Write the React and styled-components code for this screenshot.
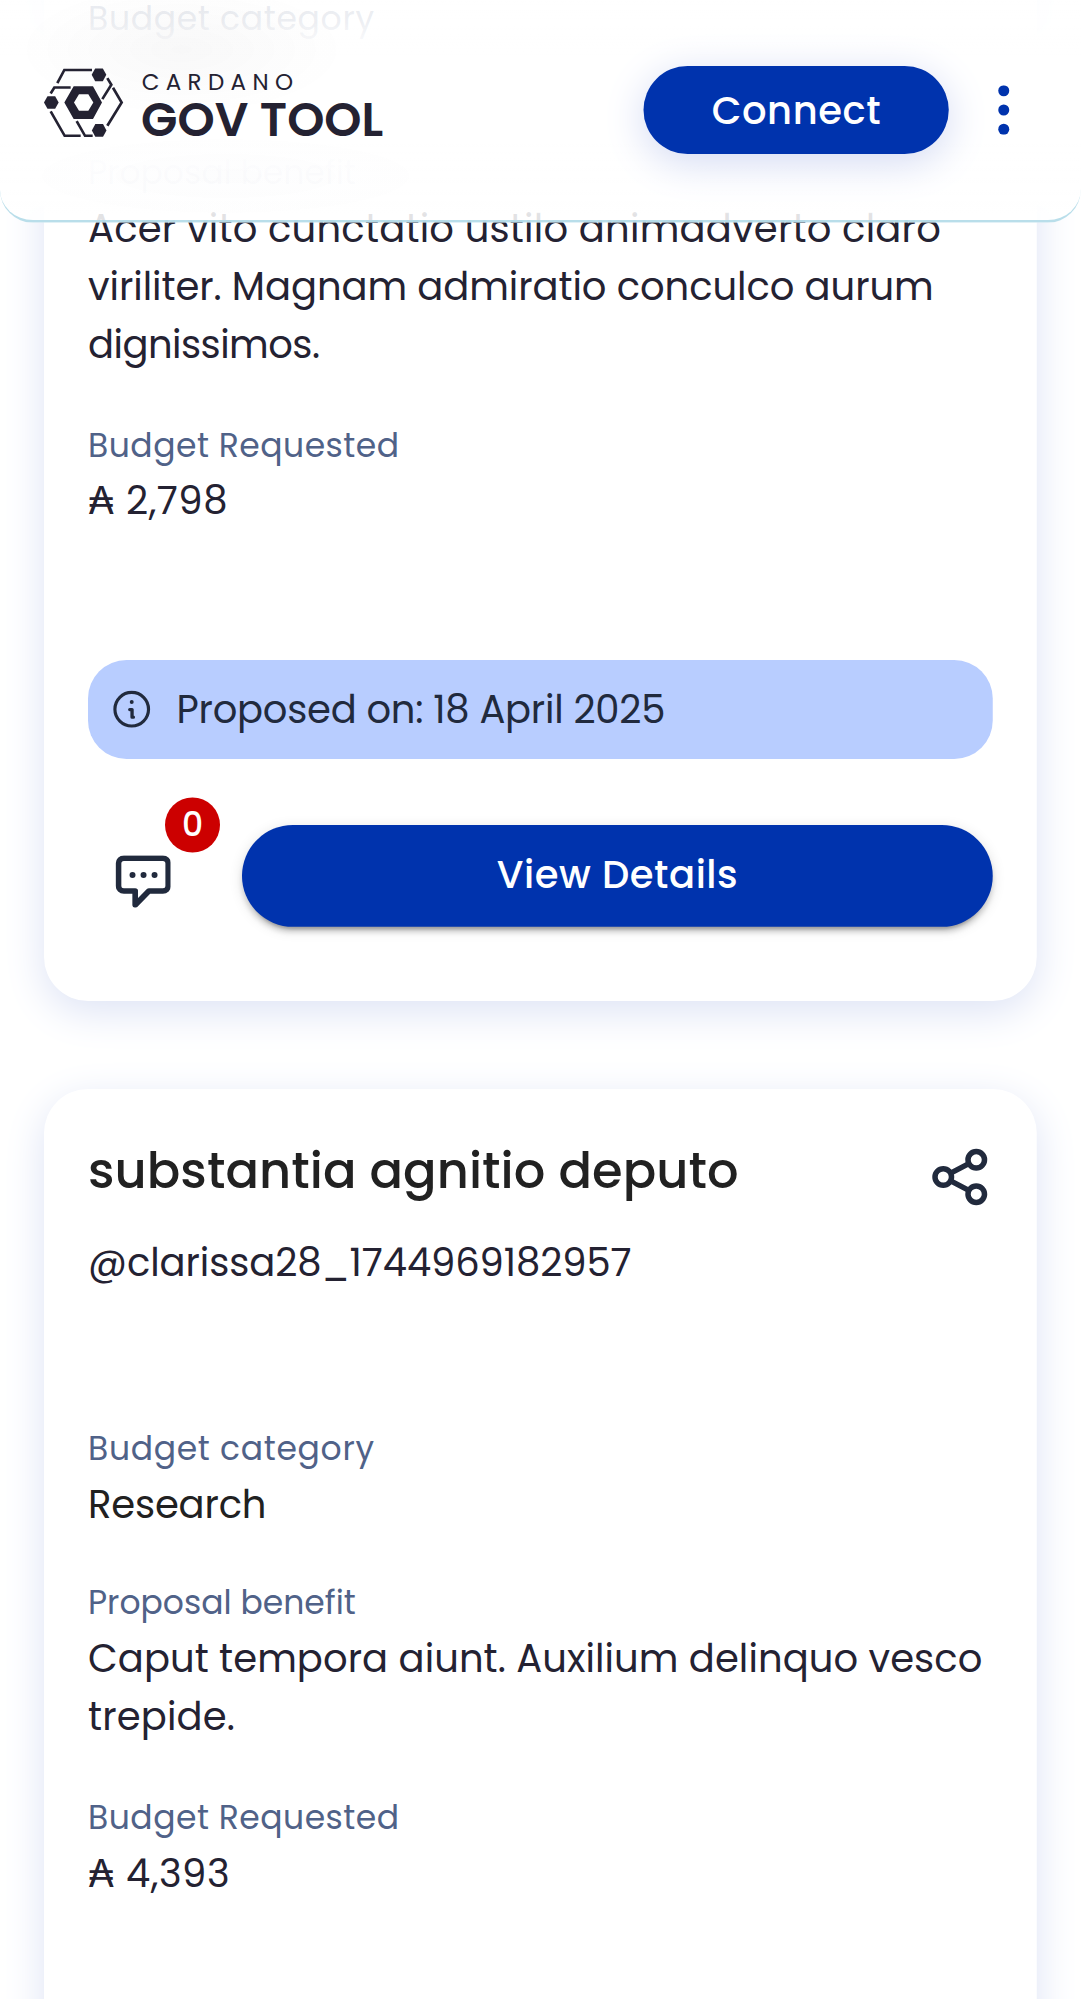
import React from "react";
import styled, { createGlobalStyle } from "styled-components";

const GlobalStyle = createGlobalStyle`
  *, *::before, *::after { box-sizing: border-box; }
  body { margin: 0; background: #fff; overflow: hidden; }
`;

const Viewport = styled.div`
  width: 1081px;
  height: 1999px;
  overflow: hidden;
`;

/* Mobile layout of 393px, enlarged to the device resolution. */
const Page = styled.div`
  position: relative;
  width: 393.1px;
  height: 727px;
  overflow: hidden;
  transform: scale(2.75);
  transform-origin: 0 0;
  font-family: Poppins, Inter, sans-serif;
  font-size: 14px;
  line-height: 21px;
  color: #242232;
`;

const Header = styled.header`
  position: absolute;
  inset: 0 0 auto 0;
  z-index: 2;
  height: 80.8px;
  padding: 1px 22px 0 16px;
  display: flex;
  align-items: center;
  border-bottom: 1px solid #add8e6d9;
  border-radius: 0 0 12px 12px;
  background:
    radial-gradient(ellipse 60px 24px at 66px 18px, rgba(30, 30, 40, 0.03), rgba(30, 30, 40, 0) 100%),
    radial-gradient(ellipse 80px 16px at 82px 64px, rgba(60, 80, 140, 0.01), rgba(60, 80, 140, 0) 100%),
    linear-gradient(
      rgba(255, 255, 255, 0.87) 0,
      rgba(255, 255, 255, 0.9) 8px,
      rgba(255, 255, 255, 0.95) 13px,
      #fff 20px,
      #fff 52px,
      rgba(255, 255, 255, 0.99) 60px,
      rgba(255, 255, 255, 0.975) 73px,
      rgba(255, 255, 255, 0.87) 78px
    );
`;

const Spacer = styled.div`
  flex: 1;
`;

const LogoSvg = styled.svg`
  display: block;
  width: 123.4px;
  height: 25px;
  margin-top: -5px;
  overflow: visible;
  fill: #242232;
  font-family: Poppins, Inter, sans-serif;
`;

const Button = styled.button`
  border: 0;
  border-radius: 100px;
  background: #0033ad;
  color: #fff;
  font: 500 14px/24px Poppins, Inter, sans-serif;
  letter-spacing: 0.2px;
  text-align: center;
  padding: 0;
`;

const ConnectButton = styled(Button)`
  width: 111px;
  height: 32px;
  box-shadow: 0 3px 15px #d3daf3;
`;

const MenuDots = styled.svg`
  display: block;
  width: 12px;
  height: 18px;
  margin-left: 14px;
  fill: #0033ad;
`;

const List = styled.main`
  display: flex;
  flex-direction: column;
  gap: 32px;
  padding: 0 16px;
  margin-top: -24px;
`;

const Card = styled.article`
  display: flex;
  flex-direction: column;
  min-height: ${(p) => p.$minHeight || 0}px;
  padding: ${(p) => p.$top}px 16px 27px;
  border-radius: 16px;
  background: #fff;
  box-shadow: 0 4px 15px #dde3f5;
`;

const CardHead = styled.div`
  display: flex;
  justify-content: space-between;
  align-items: center;
`;

const Title = styled.h2`
  margin: 0;
  font-size: 18px;
  font-weight: 500;
  line-height: 24px;
  letter-spacing: 0.03px;
  color: #212121;
`;

const ShareSvg = styled.svg`
  display: block;
  width: 24px;
  height: 24px;
  margin-top: 4px;
  fill: none;
  stroke: #212a3d;
  stroke-width: 2;
`;

const Handle = styled.div`
  margin: 9px 0 47.2px;
  letter-spacing: -0.03px;
`;

const Fields = styled.dl`
  display: flex;
  flex-direction: column;
  gap: 16px;
  margin: 0;
`;

const Label = styled.dt`
  margin-bottom: 1px;
  font-size: 12px;
  line-height: 19px;
  color: #506288;
`;

const Value = styled.dd`
  margin: 0;
  line-height: ${(p) => (p.$plain ? 20 : 21)}px;
  color: ${(p) => (p.$plain ? "#212121" : "#242232")};
`;

const Line = styled.span`
  display: block;
  white-space: nowrap;
  letter-spacing: ${(p) => p.$tracking || 0}px;
`;

const Notice = styled.div`
  display: flex;
  align-items: center;
  height: 36px;
  margin-top: 46.8px;
  padding: 0 9.2px;
  gap: 9.200px;
  border-radius: 14px;
  background: #b8cdff;
  color: #212a3d;
  line-height: 22px;
`;

const InfoSvg = styled.svg`
  display: block;
  width: 13.8px;
  height: 13.8px;
`;

const Actions = styled.div`
  display: flex;
  margin-top: 24px;
`;

const Comments = styled.div`
  position: relative;
  width: 56px;
  padding: 11px 0 0 9.8px;
`;

const ChatSvg = styled.svg`
  display: block;
  width: 20.4px;
  height: 19.2px;
`;

const Badge = styled.span`
  position: absolute;
  top: -10px;
  left: 28px;
  width: 20px;
  height: 20px;
  border-radius: 10px;
  background: #cc0000;
  color: #fff;
  font-size: 12px;
  font-weight: 500;
  line-height: 20px;
  text-align: center;
`;

const DetailsButton = styled(Button)`
  flex: 1;
  height: 37px;
  padding-bottom: 0.8px;
  box-shadow: 0 3px 1px -2px rgba(0, 0, 0, 0.2), 0 2px 2px rgba(0, 0, 0, 0.14), 0 1px 5px rgba(0, 0, 0, 0.12);
`;

const hexagon = (x, y) =>
  `${x - 22},${y} ${x - 11.5},${y - 19} ${x + 11.5},${y - 19} ${x + 22},${y} ${x + 11.5},${y + 19} ${x - 11.5},${y + 19}`;

function Logo() {
  return (
    <LogoSvg viewBox="42 42 1018 206">
      <g fill="none" stroke="#242232" strokeWidth="8">
        <path d="M82 85L103 45.500H186M232 70L244 90L217 133M62 116L73 98H122M249 99L275 143L232 213M62 170L104 243H152M140 199L165 243H188" />
      </g>
      <polygon points={hexagon(207, 60)} />
      <polygon points={hexagon(64, 143)} />
      <polygon points={hexagon(207.5, 227)} />
      <path fillRule="evenodd" d="M103 143L131 94H189L216 143L189 193H131ZM132 143L147 168H175L190 143L175 118H147Z" />
      <text x="335" y="106" fontSize="69" fontWeight="400" textLength="454">CARDANO</text>
      <text x="333" y="245" fontSize="142" fontWeight="600" textLength="727">GOV TOOL</text>
    </LogoSvg>
  );
}

function ShareIcon() {
  return (
    <ShareSvg viewBox="0 0 24 24">
      <circle cx="18" cy="5.75" r="3" />
      <circle cx="6" cy="12" r="3" />
      <circle cx="18" cy="18.250" r="3" />
      <path d="M8.700 10.600L15.300 7.150M8.700 13.400L15.300 16.850" />
    </ShareSvg>
  );
}

function InfoIcon() {
  return (
    <InfoSvg viewBox="159 150 114 114">
      <circle cx="216" cy="207" r="50.500" fill="none" stroke="#212a3d" strokeWidth="9.500" />
      <circle cx="216" cy="185" r="6" fill="#212a3d" />
      <path d="M210 208H217V231H221" fill="none" stroke="#212a3d" strokeWidth="10" strokeLinecap="round" strokeLinejoin="round" />
    </InfoSvg>
  );
}

function ChatIcon() {
  return (
    <ChatSvg viewBox="165 644 168 158" fill="#212a3d">
      <path
        d="M190 653H307A16 16 0 0 1 323 669V735A16 16 0 0 1 307 751H265L224 793V751H190A16 16 0 0 1 174 735V669A16 16 0 0 1 190 653Z"
        fill="none"
        stroke="#212a3d"
        strokeWidth="17"
        strokeLinejoin="round"
      />
      <circle cx="216" cy="703" r="9" />
      <circle cx="249" cy="703" r="9" />
      <circle cx="282" cy="703" r="9" />
    </ChatSvg>
  );
}

function Field({ label, tracking, plain, lines }) {
  return (
    <div>
      <Label>
        <Line $tracking={tracking}>{label}</Line>
      </Label>
      <Value $plain={plain}>
        {lines.map((line) => (
          <Line key={line.text} $tracking={line.tracking}>
            {line.text}
          </Line>
        ))}
      </Value>
    </div>
  );
}

function ProposalFields({ category, benefit, budget }) {
  return (
    <Fields>
      <Field label="Budget category" tracking={0.25} plain lines={[{ text: category, tracking: -0.06 }]} />
      <Field label="Proposal benefit" lines={benefit} />
      <Field label="Budget Requested" tracking={0.18} lines={[{ text: `₳ ${budget}`, tracking: 0.2 }]} />
    </Fields>
  );
}

const firstBenefit = [
  { text: "Acer vito cunctatio ustilo animadverto claro", tracking: 0.08 },
  { text: "viriliter. Magnam admiratio conculco aurum", tracking: -0.02 },
  { text: "dignissimos.", tracking: -0.19 },
];

const secondBenefit = [
  { text: "Caput tempora aiunt. Auxilium delinquo vesco", tracking: 0.025 },
  { text: "trepide.", tracking: 0.06 },
];

export default function App() {
  return (
    <Viewport>
      <GlobalStyle />
      <Page>
        <Header>
          <Logo />
          <Spacer />
          <ConnectButton>Connect</ConnectButton>
          <MenuDots viewBox="0 0 12 18">
            <circle cx="6" cy="2" r="2" />
            <circle cx="6" cy="9" r="2" />
            <circle cx="6" cy="16" r="2" />
          </MenuDots>
        </Header>
        <List>
          <Card $top={21}>
            <ProposalFields category="Research" benefit={firstBenefit} budget="2,798" />
            <Notice>
              <InfoIcon />
              <Line $tracking={-0.09}>Proposed on: 18 April 2025</Line>
            </Notice>
            <Actions>
              <Comments>
                <ChatIcon />
                <Badge>0</Badge>
              </Comments>
              <DetailsButton>View Details</DetailsButton>
            </Actions>
          </Card>
          <Card $top={16} $minHeight={400}>
            <CardHead>
              <Title>substantia agnitio deputo</Title>
              <ShareIcon />
            </CardHead>
            <Handle>@clarissa28_1744969182957</Handle>
            <ProposalFields category="Research" benefit={secondBenefit} budget="4,393" />
          </Card>
        </List>
      </Page>
    </Viewport>
  );
}
